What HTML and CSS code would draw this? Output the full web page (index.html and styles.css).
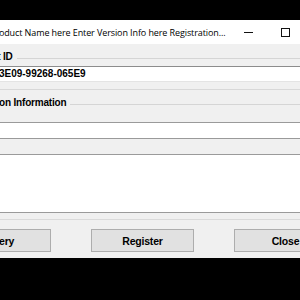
FILE: index.html
```html
<!DOCTYPE html>
<html lang="en">
<head>
  <meta charset="UTF-8" />
  <title>Registration</title>
  <link rel="stylesheet" href="styles.css">
</head>
<body>
  <div class="window">
    <div class="titlebar">
      <span class="title">Product Name here Enter Version Info here Registration...</span>
      <div class="caption">
        <span class="cap"><span class="glyph min"></span></span>
        <span class="cap"><span class="glyph max"></span></span>
        <span class="cap"><span class="glyph max"></span></span>
      </div>
    </div>

    <div class="client">
      <div class="group">
        <div class="legend"><span class="id-label">Product ID</span><i></i></div>
        <div class="field">A2F41-83E09-99268-065E9</div>
      </div>

      <div class="group last">
        <div class="legend"><span>Registration Information</span><i></i></div>
        <div class="row white"></div>
        <div class="row gray"></div>
        <div class="memo"></div>
      </div>

      <div class="sep"></div>

      <div class="buttons">
        <button type="button">Query</button>
        <button type="button">Register</button>
        <button type="button">Close</button>
      </div>
    </div>
  </div>
</body>
</html>
```

FILE: styles.css
```css
* {
  box-sizing: border-box;
  margin: 0;
  padding: 0;
}
html, body {
  background: #000;
  overflow: hidden;
}
body {
  width: 300px;
  height: 300px;
}
.window {
  margin-top: 20px;
  margin-left: -60px;
  width: 420px;
  height: 238px;
  background: #f0f0f0;
}
.titlebar {
  height: 24px;
  background: #fff;
  display: flex;
  align-items: center;
  font-family: 'Open Sans', 'Noto Sans', sans-serif;
  font-size: 9px;
  letter-spacing: -0.1px;
  color: #000;
}
.title {
  width: 290px;
  flex: none;
  padding-left: 50px;
  white-space: nowrap;
  overflow: hidden;
}
.caption {
  display: flex;
  flex: none;
}
.cap {
  width: 37px;
  height: 24px;
  display: flex;
  align-items: center;
  justify-content: center;
}
.glyph {
  display: block;
  width: 9px;
  border: 1px solid #111;
}
.glyph.min {
  height: 1px;
  border-width: 1px 0 0 0;
}
.glyph.max {
  height: 9px;
}
.client {
  padding: 6px 0 6px 0;
  font-family: 'Liberation Sans', Arial, sans-serif;
  font-weight: bold;
  font-size: 10px;
  color: #000;
}
.group {
  padding-left: 15px;
  border-bottom: 1px solid #d8d8d8;
  padding-bottom: 7px;
}
.group.last {
  border-bottom: none;
  padding-bottom: 0;
}
.legend {
  height: 13px;
  display: flex;
  align-items: center;
  letter-spacing: -0.2px;
}
.legend span {
  white-space: nowrap;
  padding-right: 4px;
}
.legend .id-label {
  margin-left: 9px;
}
.legend i {
  flex: 1;
  border-top: 1px solid #d5d5d5;
  margin-top: 3px;
}
.field {
  margin-top: 3px;
  height: 16px;
  background: #fff;
  border-top: 1px solid #8c8c8c;
  border-bottom: 1px solid #e4e4e4;
  padding-left: 5px;
  line-height: 14px;
  white-space: nowrap;
}
.group.last .legend {
  margin-top: 6px;
}
.row {
  height: 16px;
  border-top: 1px solid #9a9a9a;
}
.group.last .row.white {
  margin-top: 13px;
}
.row.white {
  background: #fff;
}
.row.gray {
  background: #f0f0f0;
}
.memo {
  height: 59px;
  background: #fff;
  border-top: 1px solid #9a9a9a;
  border-bottom: 1px solid #9a9a9a;
}
.sep {
  margin-top: 6px;
  border-top: 1px solid #dadada;
}
.buttons {
  margin-top: 9px;
  display: flex;
  gap: 40px;
  padding-left: 8px;
}
button {
  width: 103px;
  height: 23px;
  background: #e1e1e1;
  border: 1px solid #adadad;
  font-family: inherit;
  font-weight: bold;
  font-size: 10.5px;
  letter-spacing: -0.2px;
  color: #000;
}
```
